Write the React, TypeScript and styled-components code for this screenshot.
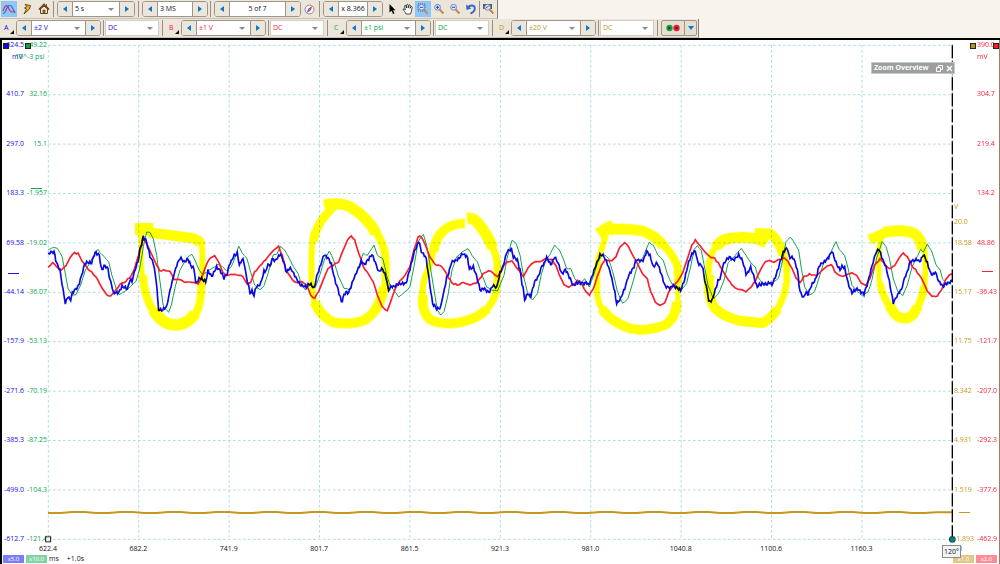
import React from 'react';
import styled, { createGlobalStyle } from 'styled-components';

const GlobalStyle = createGlobalStyle`
  * { box-sizing: border-box; }
  body { margin: 0; background: #fff; font-family: "Open Sans", "Noto Sans", sans-serif; font-size: 7px; line-height: 10px; color: #111; }
  button, input, select { font: inherit; color: inherit; margin: 0; padding: 0; }
`;

const BLUE = '#1a10f0';
const RED = '#ff2038';
const GREEN = '#0aa850';
const GOLD = '#c8961e';

const Page = styled.div`
  min-height: 100vh;
  display: flex;
  flex-direction: column;
`;

const Toolbar = styled.div`
  display: flex;
  height: 19px;
  background: #f8f3ec;
`;

const Strip = styled.div`
  display: flex;
  align-items: center;
  height: 19px;
  padding: 1px 1px 1px 1px;
  background: #ece6da;
  border-right: 1px solid #8c7c74;
  border-bottom: 1px solid #c9bfb2;
`;

const Divider = styled.span<{ $left?: number; $right?: number }>`
  width: 1px;
  height: 16px;
  margin-left: ${p => p.$left ?? 3}px;
  margin-right: ${p => p.$right ?? 3}px;
  background: #9c8c84;
`;

const ToolButton = styled.button<{ $active?: boolean; $width?: number }>`
  display: flex;
  align-items: center;
  justify-content: center;
  width: ${p => p.$width ?? 16}px;
  height: 16px;
  border: 1px solid ${p => (p.$active ? '#8cc4f4' : 'transparent')};
  background: ${p => (p.$active ? '#8ec8fa' : 'transparent')};
  svg { display: block; flex: none; }
`;

const Stepper = styled.div`
  display: flex;
  height: 16px;
  border: 1px solid #9f958c;
  border-radius: 3px;
  overflow: hidden;
  background: #fff;
`;

const StepButton = styled.button`
  display: flex;
  align-items: center;
  justify-content: center;
  width: 14px;
  border: 0;
  background: #ece6da;
`;

const Arrow = styled.span<{ $dir: 'left' | 'right' | 'down' }>`
  width: 0;
  height: 0;
  border: 3px solid transparent;
  ${p => p.$dir === 'left' && 'border-right: 4px solid #0a78d0; border-left: 0;'}
  ${p => p.$dir === 'right' && 'border-left: 4px solid #0a78d0; border-right: 0;'}
  ${p => p.$dir === 'down' && 'border-top: 4px solid #0a78d0; border-bottom: 0;'}
`;

const ValueInput = styled.input<{ $width: number; $center?: boolean }>`
  width: ${p => p.$width}px;
  padding: 0 ${p => (p.$center ? 1 : 2)}px;
  border: solid #9f958c;
  border-width: 0 1px;
  background: #fff;
  text-align: ${p => (p.$center ? 'center' : 'left')};
`;

const SelectBox = styled.span<{ $width: number; $color?: string; $framed?: boolean }>`
  position: relative;
  display: flex;
  width: ${p => p.$width}px;
  height: ${p => (p.$framed ? '16px' : 'auto')};
  color: ${p => p.$color ?? '#111'};
  background: #fff;
  border: solid ${p => (p.$framed ? '#d5ccc2' : '#9f958c')};
  border-width: ${p => (p.$framed ? '1px' : '0 1px')};
  &::after {
    content: '';
    position: absolute;
    right: 5px;
    top: 6px;
    border: 3px solid transparent;
    border-top: 3px solid #8a8a8a;
    border-bottom: 0;
    pointer-events: none;
  }
  select {
    appearance: none;
    width: 100%;
    padding: 0 2px;
    border: 0;
    background: transparent;
  }
`;

const ChannelGroup = styled.div`
  display: flex;
  align-items: center;
  width: 165px;
`;

const ChannelButton = styled.button<{ $color: string }>`
  position: relative;
  width: 14px;
  height: 16px;
  margin-right: 1px;
  border: 0;
  background: transparent;
  color: ${p => p.$color};
  text-align: left;
  padding-left: 3px;
  &::after {
    content: '';
    position: absolute;
    right: 1px;
    bottom: 2px;
    border-left: 4px solid transparent;
    border-bottom: 4px solid #111;
  }
`;

const RunButtons = styled.div`
  display: flex;
  height: 16px;
  border: 1px solid #9f958c;
  border-radius: 2px;
  background: #e6dfd0;
`;

const RunButton = styled.button<{ $width: number }>`
  display: flex;
  align-items: center;
  justify-content: center;
  width: ${p => p.$width}px;
  border: 0;
  background: transparent;
  & + & { border-left: 1px solid #9f958c; }
`;

const Scope = styled.main`
  flex: 1;
  display: flex;
  flex-direction: column;
  border: solid #000;
  border-width: 2px 0 0 2px;
  box-shadow: inset -1px 0 0 #a07c68;
  overflow: hidden;
`;

const ChartRow = styled.div`
  flex: 1;
  display: grid;
  grid-template-columns: 46px minmax(0, 1fr) 48px;
`;

const AxisPair = styled.div`
  position: relative;
  display: flex;
`;

const Axis = styled.div<{ $color: string; $width: number; $align: 'left' | 'right' }>`
  display: flex;
  flex-direction: column;
  justify-content: space-between;
  width: ${p => p.$width}px;
  padding: 0 ${p => (p.$align === 'right' ? '1px 0 0' : '0 0 2px')};
  color: ${p => p.$color};
  span {
    display: flex;
    height: 10px;
    white-space: nowrap;
    justify-content: ${p => (p.$align === 'right' ? 'flex-end' : 'flex-start')};
  }
`;

const Unit = styled.span<{ $color: string; $left: number; $top: string }>`
  position: absolute;
  left: ${p => p.$left}px;
  top: ${p => p.$top};
  color: ${p => p.$color};
  white-space: nowrap;
`;

const Handle = styled.span<{ $color: string; $left: number }>`
  position: absolute;
  top: 3px;
  left: ${p => p.$left}px;
  width: 6px;
  height: 6px;
  border: 1px solid #222;
  background: ${p => p.$color};
`;

const ZeroMark = styled.span<{ $color: string; $left: number; $top: string }>`
  position: absolute;
  left: ${p => p.$left}px;
  top: ${p => p.$top};
  width: 11px;
  height: 1px;
  background: ${p => p.$color};
`;

const PlotArea = styled.div`
  position: relative;
  margin: 5px 0;
  > svg {
    position: absolute;
    inset: 0;
    width: 100%;
    height: 100%;
    overflow: visible;
    isolation: isolate;
  }
`;

const Overview = styled.section`
  position: absolute;
  top: 17px;
  right: -3px;
  display: flex;
  align-items: center;
  gap: 3px;
  width: 84px;
  height: 12px;
  padding: 0 1px 0 2px;
  border: 1px solid #c4cac6;
  background: #9c9f9d;
  color: #fff;
  h2 { flex: 1; margin: 0; font-size: 7px; line-height: 10px; font-weight: 700; white-space: nowrap; }
  button { display: flex; border: 0; background: transparent; }
`;

const TimeAxis = styled.div`
  position: relative;
  display: flex;
  justify-content: space-between;
  height: 9px;
  line-height: 9px;
  margin: 0 48px 0 46px;
  span { display: flex; justify-content: center; width: 0; white-space: nowrap; }
`;

const AngleTip = styled.output`
  position: absolute;
  right: -9px;
  top: 1px;
  z-index: 1;
  padding: 0 1px;
  height: 13px;
  line-height: 11px;
  border: 1px solid #8a8a8a;
  background: #f4f4f8;
`;

const Footer = styled.footer`
  display: flex;
  align-items: center;
  gap: 2px;
  height: 11px;
  padding: 0 3px 0 1px;
`;

const Scale = styled.button<{ $color: string }>`
  width: 21px;
  height: 8px;
  border: 0;
  background: ${p => p.$color};
  color: #fff;
  font-size: 6px;
  line-height: 8px;
`;

const Offset = styled.span`
  flex: 1;
  padding-left: 6px;
`;

const SWEEPS = [120, 810, 1500, 2160];

function trace(sweeps: string[]) {
  return sweeps
    .map((s, i) =>
      s
        .trim()
        .split(' ')
        .map(p => {
          const [x, y] = p.split(',').map(Number);
          return [x + SWEEPS[i], y + 585] as [number, number];
        }),
    )
    .flat();
}

const line = (pts: [number, number][]) => 'M' + pts.map(p => p.join(' ')).join('L');

/* Adds the sampling ripple between recorded points. */
function ripple(pts: [number, number][], amount: number, step: number) {
  const out: [number, number][] = [];
  for (let i = 0; i < pts.length - 1; i++) {
    const [x0, y0] = pts[i];
    const [x1, y1] = pts[i + 1];
    const n = Math.max(1, Math.round((x1 - x0) / step));
    for (let k = 0; k < n; k++) {
      const x = x0 + ((x1 - x0) * k) / n;
      const noise = Math.sin(x * 1.93) + Math.sin(x * 0.71 + 2);
      out.push([Math.round(x), Math.round(y0 + ((y1 - y0) * k) / n + noise * amount)]);
    }
  }
  out.push(pts[pts.length - 1]);
  return out;
}

const blueTrace = trace([
  '25,178 30,170 42,176 50,200 60,222 66,262 76,322 84,308 92,310 100,292 110,282 118,262 128,226 134,206 152,206 160,188 168,172 178,182 186,226 192,216 204,222 212,262 220,292 236,290 246,272 262,278 270,258 276,262 286,225 294,195 302,158 310,122 320,138 330,180 340,200 348,255 356,340 368,348 380,338 390,290 400,250 410,215 420,192 432,202 444,188 452,215 462,225 467,262 480,244 488,258 497,262 504,230 518,242 530,220 540,230 552,248 562,235 568,205 580,185 592,180 598,210 606,192 614,210 622,260 630,292 636,284 642,300 650,275 662,262 672,225 680,230 684,204',
  '0,220 6,196 16,200 32,180 42,208 50,228 64,222 74,242 90,268 106,272 120,270 132,276 140,250 152,210 162,180 174,184 184,204 194,250 204,282 214,320 222,300 236,290 246,262 262,222 274,200 284,208 296,196 306,182 316,205 326,232 338,225 348,250 356,282 370,274 382,264 398,264 408,262 420,225 430,185 438,155 446,142 454,165 466,185 474,225 480,270 488,330 500,338 512,335 520,300 530,250 544,205 556,200 568,185 578,172 590,182 598,220 610,212 620,240 630,280 644,285 656,288 668,272 680,282',
  '0,238 10,215 22,168 34,158 40,185 52,200 60,220 66,265 74,312 82,296 92,305 104,265 116,240 126,210 140,192 152,208 164,182 174,200 186,240 196,225 208,250 220,268 236,258 252,262 266,270 276,245 288,205 300,182 312,186 322,210 332,240 342,285 350,320 362,312 374,285 384,250 396,222 410,198 426,200 440,170 450,182 460,215 472,208 484,235 496,272 512,278 526,272 542,282 554,255 566,205 576,180 586,172 594,200 606,215 614,250 622,290 626,318 636,314 646,280',
  '0,250 8,215 18,195 28,184 40,200 56,184 68,195 78,235 92,222 104,250 112,278 126,262 142,266 156,268 166,245 178,205 190,175 202,160 210,188 222,195 232,230 240,285 250,305 256,292 264,300 274,275 286,250 300,212 316,200 326,190 336,172 348,200 360,222 374,215 384,262 396,290 414,286 432,292 444,265 456,215 466,180 476,165 488,190 498,215 508,260 520,320 530,300 544,288 554,250 568,208 582,192 596,200 610,182 622,205 632,238 646,232 656,260 668,278 680,262 696,255',
]);

const redTrace = trace([
  '25,218 38,202 50,215 64,224 78,214 90,188 104,174 114,176 126,198 140,218 156,232 172,252 186,280 200,298 212,304 224,290 240,268 258,258 274,242 284,220 296,180 310,130 322,150 336,180 350,210 360,228 376,225 390,230 402,252 420,254 436,262 456,262 474,266 486,245 498,212 510,190 524,182 538,205 548,232 560,242 580,238 596,240 608,245 622,268 632,262 644,232 660,212 676,195',
  '0,180 14,162 26,155 36,180 48,225 62,248 78,264 96,260 110,270 122,300 134,310 146,290 160,255 174,220 190,210 206,200 218,170 232,135 244,124 254,135 266,175 280,215 296,238 310,262 322,300 336,335 352,348 364,315 376,278 390,258 406,240 420,215 432,165 444,125 454,124 466,150 480,185 494,208 516,214 530,238 546,264 562,270 580,262 600,270 622,262 638,238 656,226 668,232 682,245',
  '0,236 10,215 22,200 36,200 48,215 70,245 84,218 100,202 120,200 140,192 156,194 168,212 178,240 192,270 206,276 220,268 232,256 246,268 258,290 268,300 280,282 292,245 304,210 316,196 336,198 348,185 360,155 374,143 386,155 400,185 414,210 428,235 442,252 452,290 466,322 480,330 494,325 506,290 520,272 534,258 548,235 562,190 576,150 586,135 596,148 610,165 628,185 644,190',
  '0,212 14,238 30,262 46,280 60,284 78,290 94,275 108,255 122,222 136,200 150,196 162,202 178,192 192,188 204,198 216,222 228,248 240,262 252,245 268,238 290,242 306,226 322,212 334,208 344,228 358,242 376,242 396,232 410,242 424,265 438,272 450,250 464,210 480,192 492,205 508,222 524,212 538,188 550,174 562,185 576,212 592,232 608,255 622,290 636,304 652,304 664,285 676,255 688,240 696,236',
]);

const greenTrace = trace([
  '25,165 38,157 52,162 66,182 74,225 84,280 96,300 108,298 122,270 136,225 150,205 162,180 174,162 186,180 206,198 216,240 228,280 238,300 256,290 272,275 288,258 298,225 310,155 320,110 330,110 340,130 350,180 360,260 370,335 386,352 394,330 406,275 420,225 432,205 444,185 456,178 466,198 478,228 488,240 500,232 516,218 534,208 548,215 560,228 574,215 586,185 596,152 606,172 620,188 632,230 644,272 660,284 672,272 684,235',
  '0,215 10,180 20,178 32,155 44,165 56,185 70,215 84,235 96,272 106,284 120,270 136,278 150,240 164,190 178,168 192,200 206,245 222,280 240,285 254,245 268,210 280,175 292,182 312,150 322,180 338,190 350,240 362,275 386,305 404,292 420,275 432,215 444,140 460,118 470,150 478,200 490,270 502,345 512,360 522,350 534,300 546,225 560,185 576,172 594,160 606,180 622,200 636,240 650,275 666,285 682,288',
  '0,272 12,240 22,185 36,138 48,144 60,180 72,250 84,300 98,316 112,295 124,240 136,200 150,180 164,148 178,165 190,190 200,220 212,222 224,250 240,270 254,252 268,275 280,245 292,205 304,180 314,178 326,192 338,230 352,290 368,325 384,310 398,265 412,210 430,185 448,140 460,152 474,180 490,195 502,238 516,265 530,275 546,282 560,265 572,215 582,165 592,154 604,165 612,210 624,270 640,310 652,300',
  '0,285 12,255 24,205 38,190 52,172 64,160 78,180 92,205 106,215 114,245 128,268 144,265 160,262 176,248 188,195 198,140 210,126 222,142 236,165 244,220 254,275 268,302 284,290 298,245 312,200 330,180 348,140 358,165 374,182 384,220 396,270 412,290 426,300 444,292 456,255 470,190 486,140 498,156 508,190 520,250 534,292 548,302 562,270 576,215 594,180 602,162 610,172 622,148 634,165 648,210 660,222 668,255 682,268 696,258',
]);

/* Highlighter strokes: sweep, pen width, path. */
const MARKS: [number, number, string][] = [
  [0, 36, 'M285 102H340'],
  [0, 31, 'M325 112L400 122L440 127Q478 130 482 150'],
  [0, 18, 'M481 132Q490 160 486 215Q489 260 484 310'],
  [0, 24, 'M484 265Q484 345 458 366'],
  [0, 34, 'M466 355Q440 390 405 390Q365 388 340 345'],
  [0, 24, 'M346 358Q312 310 308 240'],
  [0, 14, 'M309 260Q302 200 302 120'],
  [1, 33, 'M162 30Q220 18 250 42Q292 68 318 115'],
  [1, 24, 'M310 98Q342 142 346 185Q350 230 344 290'],
  [1, 30, 'M342 275Q330 345 285 374Q245 392 190 382Q150 362 134 322'],
  [1, 18, 'M134 325Q122 280 125 225Q122 150 132 110'],
  [1, 26, 'M130 140Q138 90 172 55L192 32'],
  [1, 29, 'M585 85Q538 86 515 112Q496 132 490 170'],
  [1, 19, 'M492 150Q484 205 470 235Q456 265 457 310'],
  [1, 29, 'M460 298Q452 345 478 372Q510 392 570 382Q625 370 650 342'],
  [1, 22, 'M645 350Q682 308 681 265L683 220'],
  [1, 22, 'M682 250Q688 185 660 145'],
  [1, 34, 'M668 158Q648 110 620 80Q608 68 591 70'],
  [2, 35, 'M295 117L325 98L340 92'],
  [2, 32, 'M305 106Q370 98 425 107Q465 120 490 152'],
  [2, 24, 'M475 135Q515 170 532 212L535 265'],
  [2, 15, 'M534 230L533 350'],
  [2, 29, 'M530 320Q528 370 495 390Q440 412 390 400Q330 380 305 340'],
  [2, 18, 'M312 350Q286 318 292 270Q287 200 304 165L318 120'],
  [3, 32, 'M140 145Q110 124 50 128Q5 128 -14 158'],
  [3, 19, 'M-8 150Q-25 165 -33 205L-37 290'],
  [3, 30, 'M-32 240Q-38 310 -15 340Q10 366 60 378L128 384Q155 370 172 342'],
  [3, 20, 'M166 352Q194 310 200 260Q203 200 188 172'],
  [3, 29, 'M190 180Q174 130 150 115L104 114'],
  [3, 30, 'M448 134L490 115L510 106'],
  [3, 33, 'M490 112Q550 102 582 115Q605 130 606 165'],
  [3, 17, 'M608 145Q620 190 615 240L612 300'],
  [3, 23, 'M612 275Q604 320 588 345'],
  [3, 31, 'M592 335Q580 370 552 370Q525 368 508 330'],
  [3, 22, 'M512 340Q486 300 480 265'],
  [3, 15, 'M480 275Q472 220 478 150L488 120'],
];

const auxTrace = Array.from({ length: 38 }, (_, i) => `${144 + i * 72} ${i % 2 ? 1536 : 1539}H${144 + i * 72 + 38}`)
  .map((s, i) => (i === 37 ? '2808 1537H2856' : s))
  .join('L');

const GRID = Array.from({ length: 11 }, (_, i) => i);

const Plot = () => (
  <svg viewBox="144 135 2712 1482" preserveAspectRatio="none" role="img" aria-label="Oscilloscope traces" fill="none">
    <g stroke="#b0dce2" strokeWidth="3" strokeDasharray="8 7">
      {GRID.map(i => (
        <path key={i} d={`M${145 + i * 271.2} 135V1617M144 ${136 + i * 148.2}H2856`} />
      ))}
    </g>
    <path d={'M' + auxTrace} stroke={GOLD} strokeWidth="6" />
    <path d={line(ripple(greenTrace, 1, 8))} stroke="#14a050" strokeWidth="3" />
    <path d={line(ripple(redTrace, 1, 6))} stroke="#f8202c" strokeWidth="5" />
    <path d={line(ripple(blueTrace, 4, 3))} stroke="#0c08e4" strokeWidth="5" />
    <g style={{ mixBlendMode: 'multiply' }} stroke="#ffff00" strokeLinejoin="round">
      {MARKS.map(([s, w, d], i) => (
        <path key={i} d={d} strokeWidth={w} transform={`translate(${SWEEPS[s]} 585)`} />
      ))}
    </g>
    <path d="M2857 135V1617" stroke="#000" strokeWidth="4" strokeDasharray="40 8" />
    <rect x="137" y="1610" width="15" height="15" fill="#fff" stroke="#111" strokeWidth="3" />
    <circle cx="2857" cy="1618" r="9" fill="#0a8080" stroke="#053838" strokeWidth="3" />
  </svg>
);

const ScopeIcon = () => (
  <svg width="14" height="12" viewBox="0 0 14 12" fill="none">
    <path d="M1 8C3 2 5 1 6.500 5S10 10 13 8" stroke="#d83058" strokeWidth="1.2" />
    <path d="M1 10C2 11 3.500 9 4.500 6S8 1 10 4L13 10" stroke="#4a58d8" strokeWidth="1.1" />
  </svg>
);
const BoltIcon = () => (
  <svg width="12" height="12" viewBox="0 0 12 12">
    <path d="M4 1.500L9.500 2.500L8.500 6L3 11L5.500 6L3.500 5L6 3.500Z" fill="#f0b020" stroke="#54421c" strokeWidth="0.9" />
  </svg>
);
const HomeIcon = () => (
  <svg width="12" height="12" viewBox="0 0 12 12">
    <path d="M2.500 6V10.500H9.500V6L6 3Z" fill="#f6edcf" stroke="#5b4523" />
    <path d="M1 6.500L6 1.500L11 6.500" fill="none" stroke="#6b3c14" strokeWidth="1.6" />
    <path d="M8.500 1V4M5 7H7V10.500H5Z" fill="#b87318" stroke="#5b4523" strokeWidth="0.8" />
  </svg>
);
const CompassIcon = () => (
  <svg width="11" height="11" viewBox="0 0 11 11">
    <circle cx="5.500" cy="5.500" r="4.500" fill="#f4f4fa" stroke="#8c8c96" />
    <path d="M8.500 2L6.500 6.500L4.500 4.500Z" fill="#e03838" />
    <path d="M2.500 9L4.500 4.500L6.500 6.500Z" fill="#4468c8" />
  </svg>
);
const PointerIcon = () => (
  <svg width="10" height="12" viewBox="0 0 10 12">
    <path d="M2.500 1V9.500L4.500 7.700L6 11L7.500 10.300L6.100 7.200H8.500Z" fill="#000" />
  </svg>
);
const HandIcon = () => (
  <svg width="12" height="12" viewBox="0 0 12 12">
    <path d="M4 11C3.500 9 1 7 1.200 6.200S2.800 6 3.300 7L2.500 3C2.800 2 3.700 2.200 4 3L4.500 5L4.500 2C5 1 6 1 6.200 2V5L7 2.200C7.500 1.500 8.300 1.800 8.300 2.500L8 5.300L9 3.800C9.700 3.200 10.400 3.800 10.200 4.500C9.500 7 9.500 9 8.500 11Z" fill="#fff" stroke="#222" strokeWidth="0.8" />
  </svg>
);
const ZoomIcon = ({ kind }: { kind: 'area' | 'in' | 'out' | 'full' }) => (
  <svg width="12" height="12" viewBox="0 0 12 12" fill="none">
    {kind === 'area' && <path d="M1 1H8V8H1Z" stroke="#385c98" strokeDasharray="1 1" />}
    {kind === 'full' && <path d="M0 1H9V6H0Z" fill="#4c5c68" />}
    <path d="M6.500 6.500L10.500 10.500" stroke="#c8854c" strokeWidth="2" />
    <circle cx="4.600" cy="4.300" r="2.900" fill="#dcebfc" stroke="#6c88b8" />
    {kind !== 'full' && <path d="M3 4.300H6.200" stroke="#3838c0" />}
    {kind === 'in' && <path d="M4.600 2.700V5.900" stroke="#3838c0" />}
    {kind === 'full' && <path d="M3 5L5.800 3" stroke="#48586c" />}
  </svg>
);
const UndoIcon = () => (
  <svg width="12" height="12" viewBox="0 0 12 12" fill="none">
    <path d="M3 4.500C5 1.500 10 2 9.800 5.500C9.700 8 8 9.500 5.500 10.500" stroke="#3465c8" strokeWidth="1.900" />
    <path d="M1 1.500L1.500 7L6.300 5.500Z" fill="#3465c8" />
  </svg>
);

const Step = ({ dir, label }: { dir: 'left' | 'right'; label: string }) => (
  <StepButton type="button" aria-label={label}>
    <Arrow $dir={dir} />
  </StepButton>
);

const Picker = (p: { width: number; value: string; label: string; color?: string; framed?: boolean }) => (
  <SelectBox $width={p.width} $color={p.color} $framed={p.framed}>
    <select aria-label={p.label} defaultValue={p.value}>
      <option>{p.value}</option>
    </select>
  </SelectBox>
);

const Field = (p: { label: string; value: string; width: number; center?: boolean }) => (
  <Stepper>
    <Step dir="left" label={`Previous ${p.label}`} />
    <ValueInput aria-label={p.label} defaultValue={p.value} $width={p.width} $center={p.center} />
    <Step dir="right" label={`Next ${p.label}`} />
  </Stepper>
);

const CHANNELS = [
  { name: 'A', range: '±2 V', color: BLUE },
  { name: 'B', range: '±1 V', color: RED },
  { name: 'C', range: '±1 psi', color: GREEN },
  { name: 'D', range: '±20 V', color: GOLD },
];

const A_LABELS = ['624.5', '410.7', '297.0', '183.3', '69.58', '-44.14', '-157.9', '-271.6', '-385.3', '-499.0', '-612.7'];
const C_LABELS = ['49.22', '32.16', '15.1', '-1.957', '-19.02', '-36.07', '-53.13', '-70.19', '-87.25', '-104.3', '-121.4'];
const D_LABELS = ['', '', '', '', '18.58', '15.17', '11.75', '8.342', '4.931', '1.519', '-1.893'];
const B_LABELS = ['390.0', '304.7', '219.4', '134.2', '48.86', '-36.43', '-121.7', '-207.0', '-292.3', '-377.6', '-462.9'];
const TIMES = ['622.4', '682.2', '741.9', '801.7', '861.5', '921.3', '981.0', '1040.8', '1100.6', '1160.3', '1220.1'];

const AxisLabels = (p: { labels: string[]; color: string; width: number; align: 'left' | 'right' }) => (
  <Axis $color={p.color} $width={p.width} $align={p.align}>
    {p.labels.map((t, i) => (
      <span key={i}>{t}</span>
    ))}
  </Axis>
);

export default function App() {
  return (
    <Page>
      <GlobalStyle />
      <Toolbar role="toolbar" aria-label="Capture">
        <Strip>
          <ToolButton $active aria-label="Scope mode"><ScopeIcon /></ToolButton>
          <ToolButton $width={20} aria-label="Auto setup"><BoltIcon /></ToolButton>
          <ToolButton $width={13} aria-label="Home"><HomeIcon /></ToolButton>
          <Divider />
          <Stepper>
            <Step dir="left" label="Shorter timebase" />
            <Picker width={48} value="5 s" label="Timebase" />
            <Step dir="right" label="Longer timebase" />
          </Stepper>
          <Divider />
          <Field label="samples" value="3 MS" width={36} />
          <Divider $left={2} />
          <Field label="buffer" value="5 of 7" width={57} center />
          <ToolButton $width={16} aria-label="Buffer navigator"><CompassIcon /></ToolButton>
          <Divider $left={2} />
          <Field label="zoom factor" value="x 8.366" width={30} center />
          <ToolButton $width={18} aria-label="Select"><PointerIcon /></ToolButton>
          <ToolButton $width={14} aria-label="Pan"><HandIcon /></ToolButton>
          <ToolButton $active aria-label="Zoom to area"><ZoomIcon kind="area" /></ToolButton>
          <ToolButton aria-label="Zoom in"><ZoomIcon kind="in" /></ToolButton>
          <ToolButton aria-label="Zoom out"><ZoomIcon kind="out" /></ToolButton>
          <ToolButton aria-label="Undo zoom"><UndoIcon /></ToolButton>
          <Divider $left={0} $right={2} />
          <ToolButton $width={14} aria-label="Zoom full"><ZoomIcon kind="full" /></ToolButton>
        </Strip>
      </Toolbar>
      <Toolbar role="toolbar" aria-label="Channels">
        <Strip>
          {CHANNELS.map(c => (
            <ChannelGroup key={c.name}>
              <ChannelButton $color={c.color} aria-label={`Channel ${c.name} options`}>{c.name}</ChannelButton>
              <Stepper>
                <Step dir="left" label={`Channel ${c.name} range down`} />
                <Picker width={55} value={c.range} label={`Channel ${c.name} range`} color={c.color} />
                <Step dir="right" label={`Channel ${c.name} range up`} />
              </Stepper>
              <Divider $left={2} $right={1} />
              <Picker width={54} value="DC" label={`Channel ${c.name} coupling`} color={c.color} framed />
              <Divider $right={0} />
            </ChannelGroup>
          ))}
          <RunButtons>
            <RunButton $width={22} aria-label="Start or stop capture">
              <svg width="14" height="8" viewBox="0 0 14 8">
                <circle cx="3.500" cy="4" r="3.200" fill="#18a048" />
                <circle cx="10.500" cy="4" r="3.200" fill="#f01c2c" />
                <path d="M2.500 2.500L5 4L2.500 5.500ZM9.500 3H11.500V5H9.500Z" fill="#222" />
              </svg>
            </RunButton>
            <RunButton $width={12} aria-label="Trigger options"><Arrow $dir="down" /></RunButton>
          </RunButtons>
        </Strip>
      </Toolbar>
      <Scope>
        <ChartRow>
          <AxisPair>
            <AxisLabels labels={A_LABELS} color={BLUE} width={23} align="right" />
            <AxisLabels labels={C_LABELS} color={GREEN} width={23} align="right" />
            <Unit $color={BLUE} $left={10} $top="12px">mV</Unit>
            <Unit $color={GREEN} $left={13} $top="12px">10^-3 psi</Unit>
            <Handle $color="#0808f0" $left={1} />
            <Handle $color="#0a9c48" $left={23} />
            <ZeroMark $color={GREEN} $left={29} $top="29.3%" />
            <ZeroMark $color={BLUE} $left={6} $top="46.2%" />
          </AxisPair>
          <PlotArea>
            <Plot />
            <Overview>
              <h2>Zoom Overview</h2>
              <button type="button" aria-label="Restore">
                <svg width="7" height="7" viewBox="0 0 7 7" fill="none" stroke="#fff">
                  <path d="M2.500 2.500V0.500H6.500V4.500H4.500M0.500 2.500H4.500V6.500H0.500Z" />
                </svg>
              </button>
              <button type="button" aria-label="Close">
                <svg width="7" height="7" viewBox="0 0 7 7" stroke="#fff" strokeWidth="1.400">
                  <path d="M1 1L6 6M6 1L1 6" />
                </svg>
              </button>
            </Overview>
          </PlotArea>
          <AxisPair>
            <AxisLabels labels={D_LABELS} color={GOLD} width={23} align="left" />
            <AxisLabels labels={B_LABELS} color={RED} width={24} align="left" />
            <Unit $color={GOLD} $left={2} $top="32.2%">V</Unit>
            <Unit $color={GOLD} $left={2} $top="35.2%">20.0</Unit>
            <Unit $color={RED} $left={25} $top="12px">mV</Unit>
            <Handle $color="#c09018" $left={18} />
            <Handle $color="#f81c2c" $left={41} />
            <ZeroMark $color={RED} $left={30} $top="45.8%" />
            <ZeroMark $color={GOLD} $left={7} $top="93.6%" />
          </AxisPair>
        </ChartRow>
        <TimeAxis>
          {TIMES.map(t => (
            <span key={t}>{t}</span>
          ))}
          <AngleTip>120°</AngleTip>
        </TimeAxis>
        <Footer>
          <Scale $color="#7c7cfa">x5.0</Scale>
          <Scale $color="#80d4a4">x10.0</Scale>
          <span>ms</span>
          <Offset>+1.0s</Offset>
          <Scale $color="#e0c888">x1.0</Scale>
          <Scale $color="#ff8c98">x2.0</Scale>
        </Footer>
      </Scope>
    </Page>
  );
}
